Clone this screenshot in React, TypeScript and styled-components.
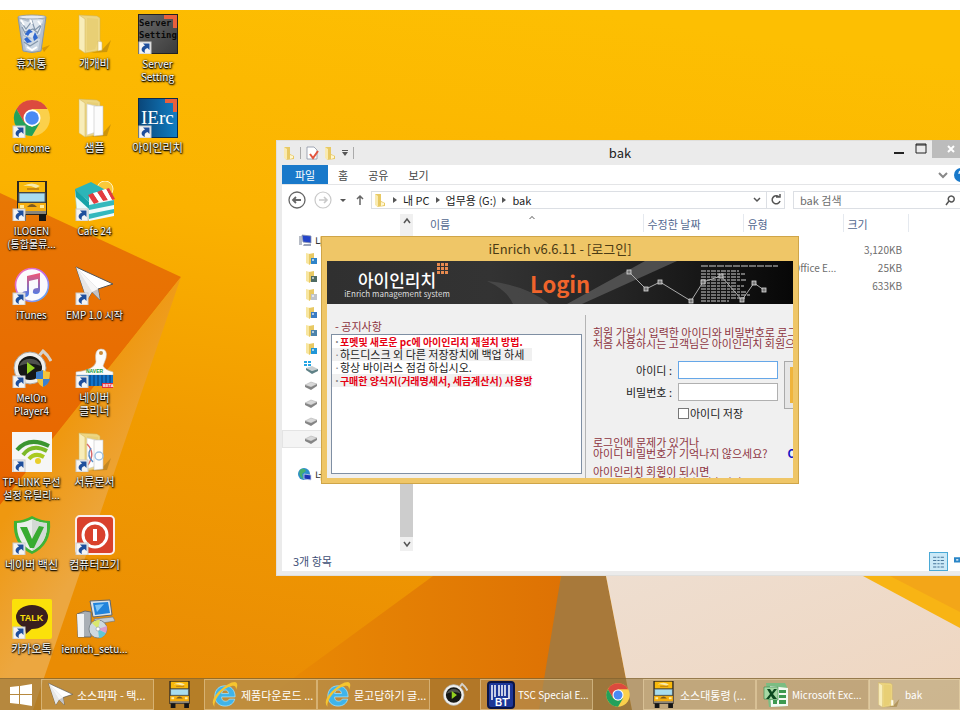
import React from "react";
import styled, { createGlobalStyle, css } from "styled-components";

const sans = `"Noto Sans CJK KR", "Noto Sans", sans-serif`;

const GlobalStyle = createGlobalStyle`
  * { box-sizing: border-box; }
  body { margin: 0; background: #fff; font-family: ${sans}; font-size: 11px; color: #333; }
  button, input { font: inherit; color: inherit; margin: 0; padding: 0; border: 0; background: none; border-radius: 0; }
  a { color: inherit; text-decoration: none; }
  ul { list-style: none; margin: 0; padding: 0; }
  svg { display: block; flex: none; }
`;

/* ---------- icons ---------- */

type IconProps = { size?: number };

const Arrow = () => (
  <g>
    <rect x="1" y="28" width="12" height="12" fill="#f4f4f4" stroke="#c9c9c9" strokeWidth="1" />
    <path d="M5 29.500h6.500V36l-2-2C7 34.500 6 36.500 7 39 2.500 37.500 2.500 33.500 7 31.500z" fill="#1f4f9c" />
  </g>
);

const RecycleBin = ({ size = 40 }: IconProps) => (
  <svg width={size} height={size} viewBox="0 0 40 40">
    <path d="M30 34l8-3-6 7z" fill="#b87800" opacity=".5" />
    <path d="M6 3l28 0-5 34q-9 3-18 0z" fill="#b3bfce" stroke="#8796a8" />
    <path d="M8 5l8 3 6-4 9 2-3 14-8 4-8-3z" fill="#dfe6ee" />
    <path d="M11 22l7 3 4-2 6 2-2 11q-6 2-12 0z" fill="#cdd8e4" />
    <path d="M9 8l5 7 6-8 3 9 7-6M12 28l6 4 8-5M13 18l8-3 5 4M10 13l4 8M29 12l-4 8" fill="none" stroke="#8497ac" strokeWidth="1.2" />
    <path d="M9 6l3 5M18 5l2 5M26 7l3 4M15 33l5 3 5-3" fill="none" stroke="#fff" strokeWidth="2" />
    <path d="M13 20l4-5 4 3-3 1-2 3zM23 18l3 6-4 3-1-4zM12 25l3-2 5 5-5 1z" fill="#2f68cf" />
    <ellipse cx="20" cy="3" rx="14" ry="2" fill="#e6eaf0" stroke="#8b97a6" strokeWidth=".8" />
  </svg>
);

const FolderArt = ({ docs }: { docs?: "plain" | "color" }) => (
  <g>
    <path d="M27 36l9-10-4 12-16 1z" fill="#8a6414" opacity=".4" />
    <path d="M4 1l18 1 3 2v22l2 3v7l-17 3z" fill="#edd682" stroke="#cdb058" strokeWidth=".5" />
    <path d="M12 4l11 1v22l-3 8-8 2z" fill="#e4c868" opacity=".5" />
    <path d="M4 1l6 4v34l-6-4z" fill="#f8edb9" stroke="#d2b762" strokeWidth=".5" />
    <path d="M23 27l4 1v8l-4 1z" fill="#fffbe8" stroke="#ccb060" strokeWidth=".5" />
    {docs && (
      <g>
        <path d="M12 6l9 2v26l-9 3z" fill="#fff" stroke="#cfcfcf" strokeWidth=".6" />
        <path d="M19 8h9v29l-9 1z" fill="#fcfcfc" stroke="#c4c4c4" strokeWidth=".6" />
      </g>
    )}
    {docs === "color" && (
      <g fill="none" strokeWidth="1.4">
        <path d="M12 12q9 9 1 21" stroke="#d9686a" />
        <path d="M16 16q-5 8 2 14" stroke="#5a8fc8" />
        <circle cx="24" cy="24" r="4" stroke="#9cc0e2" />
      </g>
    )}
  </g>
);

const Folder = ({ size = 40, docs, linked }: IconProps & { docs?: "plain" | "color"; linked?: boolean }) => (
  <svg width={size} height={size} viewBox="0 0 40 40">
    <FolderArt docs={docs} />
    {linked && <Arrow />}
  </svg>
);

const ServerTile = () => (
  <svg width="40" height="40" viewBox="0 0 40 40">
    <defs>
      <linearGradient id="srv" x1="0" y1="0" x2="1" y2="1">
        <stop offset="0" stopColor="#6a6a6a" />
        <stop offset="1" stopColor="#3b3b3b" />
      </linearGradient>
    </defs>
    <rect x=".5" y=".5" width="39" height="39" fill="url(#srv)" stroke="#222" />
    <path d="M26 1h13v13h-4V5h-9z" fill="#e9603c" />
    <g fontFamily="DejaVu Sans Mono, monospace" fontSize="9" fontWeight="700" fill="#0a0a0a">
      <text x="1" y="12">Server</text>
      <text x="1" y="24">Setting</text>
    </g>
    <Arrow />
  </svg>
);

const IErcTile = () => (
  <svg width="40" height="40" viewBox="0 0 40 40">
    <defs>
      <linearGradient id="ierc" x1="0" y1="0" x2="1" y2="0">
        <stop offset="0" stopColor="#0a4679" />
        <stop offset="1" stopColor="#117fc4" />
      </linearGradient>
    </defs>
    <rect x=".5" y=".5" width="39" height="39" fill="url(#ierc)" stroke="#0b2c4d" />
    <path d="M27 1h12v13h-4V5h-8z" fill="#e9603c" />
    <text x="3" y="26" fontFamily="Liberation Serif, serif" fontSize="19" fill="#fff">IErc</text>
    <Arrow />
  </svg>
);

const Chrome = ({ size = 40, linked }: IconProps & { linked?: boolean }) => (
  <svg width={size} height={size} viewBox="0 0 40 40">
    <circle cx="20" cy="20" r="18" fill="#fbd04b" />
    <path d="M20 11h15.600A18 18 0 0 0 4.400 11l8 14z" fill="#dc4a3e" />
    <path d="M4.400 11A18 18 0 0 0 20 38l8-13.500-8 4.500-7.800-4.500z" fill="#23a15b" />
    <circle cx="20" cy="20" r="8.500" fill="#fff" />
    <circle cx="20" cy="20" r="6.800" fill="#4a8af4" />
    {linked && <Arrow />}
  </svg>
);

const Truck = ({ size = 40, linked }: IconProps & { linked?: boolean }) => (
  <svg width={size} height={size} viewBox="0 0 40 40">
    <rect x="5" y="0" width="30" height="34" fill="#2b2620" />
    <rect x="7" y="1" width="26" height="10" fill="#f8b90c" />
    <path d="M11 5q9-5 17 0l-4 2q-6-3-13-2z" fill="#f9e9a8" />
    <rect x="15" y="7" width="12" height="2" fill="#c98a10" />
    <rect x="7" y="12" width="26" height="9" fill="#a8dcee" stroke="#5d6a70" />
    <rect x="6" y="22" width="28" height="9" fill="#f5ae10" />
    <path d="M15 26q5-6 10 0z" fill="#7b5a20" />
    <rect x="8" y="24" width="4" height="3" fill="#ffec9e" />
    <rect x="28" y="24" width="4" height="3" fill="#ffec9e" />
    <rect x="6" y="30" width="28" height="3" fill="#8a8478" />
    <rect x="7" y="33" width="7" height="7" fill="#151515" />
    <rect x="27" y="33" width="7" height="7" fill="#151515" />
    {linked && <Arrow />}
  </svg>
);

const Cafe = () => (
  <svg width="40" height="40" viewBox="0 0 40 40">
    <circle cx="30" cy="8" r="8" fill="#fbc93a" stroke="#fff2be" />
    <path d="M0 8l16-7 22 12-24 9z" fill="#2cb5b8" />
    <path d="M0 9l14 12v18L2 32z" fill="#eafafa" stroke="#9fd3d6" strokeWidth=".6" />
    <path d="M0 8l14 13v7L1 16z" fill="#15a3a8" />
    <path d="M14 14l18-6 7 12v15l-25 5z" fill="#f1fbfb" />
    <path d="M13 14l5-2 6 9-5 2zM22 11l5-2 6 10-5 1zM31 8l3-1 6 11-3 1z" fill="#e33b3f" />
    <path d="M18 12l4-1 6 9-4 1zM27 9l4-1 6 11-4 0z" fill="#fff" />
    <path d="M14 24l25-5v5l-25 5zM14 33l25-5v4l-25 6z" fill="#34b8bd" />
    <Arrow />
  </svg>
);

const ITunes = () => (
  <svg width="40" height="40" viewBox="0 0 40 40">
    <defs>
      <linearGradient id="itn" x1="0" y1="0" x2="1" y2="1">
        <stop offset="0" stopColor="#fa6ea8" />
        <stop offset=".5" stopColor="#c26be8" />
        <stop offset="1" stopColor="#46b8f5" />
      </linearGradient>
      <linearGradient id="itnNote" x1="0" y1="0" x2="0" y2="1">
        <stop offset="0" stopColor="#f25473" />
        <stop offset="1" stopColor="#3f7ff0" />
      </linearGradient>
    </defs>
    <circle cx="20" cy="20" r="16.500" fill="#fafafd" stroke="url(#itn)" strokeWidth="1.600" />
    <path d="M15 11l13-3v17q0 4-4 4t-3-3q0-3 5-3V14l-9 2v12q0 4-4 4t-3-3q0-3 5-3z" fill="url(#itnNote)" />
    <Arrow />
  </svg>
);

const PaperPlane = ({ size = 40, linked }: IconProps & { linked?: boolean }) => (
  <svg width={size} height={size} viewBox="0 0 40 40">
    <path d="M1 2l37 17-15 5 2 11-8-8-5 8z" fill="#fff" stroke="#555" strokeWidth="1" />
    <path d="M1 2l16 25-5 8z" fill="#e6e6e6" />
    <path d="M1 2l22 22 2 11-8-8z" fill="#c3c3c6" />
    <path d="M1 2l16 25 6-3z" fill="#f6f6f6" />
    {linked && <Arrow />}
  </svg>
);

const MelOn = ({ size = 40, linked }: IconProps & { linked?: boolean }) => (
  <svg width={size} height={size} viewBox="0 0 40 40">
    <path d="M27 8l4-5q5 4 8 10" fill="none" stroke="#d5d2cb" strokeWidth="3" />
    <circle cx="18" cy="20" r="16" fill="#efefed" stroke="#a9a7a2" />
    <circle cx="18" cy="20" r="12" fill="#161816" />
    <path d="M7 18q11-5 22 0a12 12 0 0 0-22 0z" fill="#4e514d" />
    <path d="M15 14l8 6-8 6z" fill="#93d120" />
    {linked && (
      <g>
        <path d="M31 22q4 2 7 2 0 12-7 15-7-3-7-15 3 0 7-2z" fill="#f5c43a" />
        <path d="M31 22v9h-7v-7q3 0 7-2zM31 31h7q-1 5-7 8z" fill="#3c80cd" />
        <Arrow />
      </g>
    )}
  </svg>
);

const Cleaner = () => (
  <svg width="40" height="40" viewBox="0 0 40 40">
    <path d="M21 14q-2-13 5-13t5 9l-3 8q2 4 10 6v3H1v-3q18-2 20-10z" fill="#fbfbfb" stroke="#c6c6c6" strokeWidth=".6" />
    <circle cx="26" cy="5" r="2" fill="#c98b3c" />
    <text x="11" y="25" fontFamily="Liberation Sans, sans-serif" fontSize="5" fontWeight="700" fill="#179c3c">NAVER</text>
    <path d="M2 27h36v10q-18 2-36 0z" fill="#1274c9" />
    <path d="M15 27v11M19 27v11M23 27v11M27 27v11M31 27v11M35 27v11" stroke="#063a77" />
    <rect x="27" y="35" width="11" height="5" fill="#e3323c" />
    <text x="28" y="39" fontFamily="Liberation Sans, sans-serif" fontSize="4" fontWeight="700" fill="#fff">BETA</text>
    <Arrow />
  </svg>
);

const TpLink = () => (
  <svg width="40" height="40" viewBox="0 0 40 40">
    <rect width="40" height="40" fill="#f6f6f6" />
    <g fill="none" strokeWidth="4">
      <path d="M5 18Q17 4 37 14" stroke="#3b9531" />
      <path d="M11 23q9-12 24-4" stroke="#7cb928" />
      <path d="M17 27q6-7 15-2" stroke="#a9ca20" />
    </g>
    <circle cx="26" cy="29" r="3" fill="#e9ce2c" />
    <Arrow />
  </svg>
);

const Vaccine = () => (
  <svg width="40" height="40" viewBox="0 0 40 40">
    <path d="M20 1q9 5 18 5 2 24-18 33Q0 30 2 6q9 0 18-5z" fill="#3fb335" />
    <path d="M20 4q8 4 15 4 1 20-15 28Q4 28 5 8q7 0 15-4z" fill="#e9eeea" />
    <path d="M20 4q8 4 15 4 1 20-15 28z" fill="#d3dad5" />
    <path d="M8 12h7l5 12 7-13 5 1-10 21h-4z" fill="#38ab31" />
    <Arrow />
  </svg>
);

const PowerOff = () => (
  <svg width="40" height="40" viewBox="0 0 40 40">
    <rect x="1" y="1" width="38" height="38" rx="4" fill="#d9412c" stroke="#fbeeea" strokeWidth="2" />
    <circle cx="20" cy="20" r="12" fill="none" stroke="#fff" strokeWidth="3" />
    <rect x="18" y="14" width="4" height="12" fill="#fff" />
    <Arrow />
  </svg>
);

const Talk = () => (
  <svg width="40" height="40" viewBox="0 0 40 40">
    <rect width="40" height="40" rx="2" fill="#fbe10a" />
    <ellipse cx="20" cy="18" rx="16" ry="12" fill="#3a1f1e" />
    <path d="M12 26l2 9 8-7z" fill="#3a1f1e" />
    <text x="8" y="22" fontFamily="Liberation Sans, sans-serif" fontSize="9" fontWeight="700" fill="#fbe10a">TALK</text>
    <Arrow />
  </svg>
);

const Setup = () => (
  <svg width="40" height="40" viewBox="0 0 40 40">
    <path d="M15 2l20-1 2 15-19 2z" fill="#dbe1e6" stroke="#5e6670" />
    <path d="M18 4l15-1 2 11-15 2z" fill="#2083dc" />
    <path d="M20 6l9-1-7 8z" fill="#7cc4f7" />
    <path d="M19 20l19-2 2 4-19 3z" fill="#c5cbd0" stroke="#6b727a" strokeWidth=".6" />
    <path d="M2 15l8-3 6 1v25H3z" fill="#a9afb5" stroke="#575d63" strokeWidth=".8" />
    <path d="M2 15h7v23H3z" fill="#f1f3f4" />
    <circle cx="23" cy="30" r="9" fill="#cfd9de" stroke="#707b82" strokeWidth=".8" />
    <path d="M23 30l-6-6q6-4 8-3z" fill="#d9e86d" />
    <path d="M23 30l8 4q-3 5-7 5z" fill="#62c7d6" />
    <path d="M23 30l9-3q0 5-1 7z" fill="#dd9ccb" />
    <circle cx="23" cy="30" r="2" fill="#fff" stroke="#8c979e" strokeWidth=".6" />
  </svg>
);

const WindowsLogo = () => (
  <svg width="24" height="24" viewBox="0 0 24 24" fill="#fff">
    <path d="M1 4l9-1v8H1zM11 3l12-2v10H11zM1 12h9v9l-9-1zM11 12h12v11l-12-2z" />
  </svg>
);

const Explorer = () => (
  <svg width="27" height="27" viewBox="0 0 28 28">
    <path
      d="M14.500 5C20.500 5 25 9 25 16.500H11C11 19.500 12.500 21 15 21c2 0 3.200-.8 4-2.200h5.600C23.400 23.500 19.500 26 14.500 26 8.500 26 4 22 4 15.500S8.500 5 14.500 5zM11 13h7.200C18 10.700 16.700 9.300 14.600 9.300S11.200 10.700 11 13z"
      fill="#3fb4ea"
      stroke="#a5e2fa"
      strokeWidth=".8"
      fillRule="evenodd"
    />
    <path d="M4 27Q-2 22 8 11 18 1 25 1q4 1 1 8 0-5-4-4Q13 7 7 16q-5 8-3 11z" fill="#f6c52e" />
  </svg>
);

const Barcode = () => (
  <svg width="28" height="28" viewBox="0 0 28 28">
    <rect x="1" y="1" width="26" height="26" rx="3" fill="#1d3797" stroke="#0b1546" strokeWidth="2" />
    <path d="M5 4v15M8 4v12M12 4v11M15 4v11M18 4v11M22 4v14" stroke="#fff" strokeWidth="1.500" />
    <text x="8" y="25" fontFamily="Liberation Sans, sans-serif" fontSize="10" fontWeight="700" fill="#fff">BT</text>
  </svg>
);

const Excel = () => (
  <svg width="26" height="26" viewBox="0 0 26 26">
    <path d="M3 1h19l2 4v19l-18 1z" fill="#7bbd83" />
    <path d="M7 4l18 2v18l-17 1z" fill="#f4faf3" />
    <path d="M16 8h7v3h-7zM16 13h7v3h-7zM16 18h7v4h-7zM10 18h4v4h-4z" fill="#3d9a50" />
    <path d="M1 5l14 0v13L1 17z" fill="#a5d8a4" stroke="#38884a" strokeWidth=".6" />
    <path d="M4 7h3l2 3 2-3h3l-4 5 4 5h-4l-2-3-2 3H3l4-5z" fill="#0c4a20" />
  </svg>
);

type NodeKind = "pc" | "download" | "video" | "doc" | "photo" | "user" | "music" | "system" | "drive" | "net";
const folderBadge: Partial<Record<NodeKind, string>> = {
  download: "#2e83c9", video: "#4e6a63", doc: "#bfc3ca", photo: "#3a7cc4", user: "#4c83ab", music: "#2196d8",
};

const NodeIcon = ({ kind }: { kind: NodeKind }) => (
  <svg width="14" height="14" viewBox="0 0 14 14">
    {kind === "pc" && (
      <g>
        <path d="M1 2h3v9H1z" fill="#b7bcc6" />
        <path d="M4 1l9 1v7l-8-1z" fill="#2344c9" stroke="#8c95ad" strokeWidth=".8" />
        <path d="M6 10h7v2H5z" fill="#9aa3b8" />
      </g>
    )}
    {kind === "net" && (
      <g>
        <circle cx="6" cy="6" r="6" fill="#2d8ecb" />
        <path d="M2 2q4-3 6 1l-4 3 1 5q-5-3-3-9z" fill="#48b06c" />
        <path d="M6 6l7 1v5l-7-1z" fill="#1d36b5" stroke="#cad4e8" strokeWidth=".8" />
      </g>
    )}
    {kind === "system" && (
      <g>
        <path d="M0 1h3v2H0zM4 1h3v2H4zM0 4h3v2H0zM4 4h3v2H4z" fill="#25a5e3" />
        <path d="M2 8l6-2 6 3-6 2z" fill="#c8ced0" />
        <path d="M2 8l6 3 6-2v2l-6 3-6-4z" fill="#5f8186" />
      </g>
    )}
    {kind === "drive" && (
      <g>
        <path d="M1 7l6-3 6 2-6 3z" fill="#d8d8d8" stroke="#aaa" strokeWidth=".5" />
        <path d="M1 7l6 2 6-3v2l-6 4-6-3z" fill="#858585" />
      </g>
    )}
    {folderBadge[kind] && (
      <g>
        <path d="M2 1l4 1v11l-4-2z" fill="#f8e6a0" />
        <path d="M5 2l5-1v8l-5 4z" fill="#e8c964" />
        <path d="M7 6h6v6H7z" fill={folderBadge[kind]} />
        <path d="M8 7h2v2H8z" fill="#fff" opacity=".6" />
      </g>
    )}
  </svg>
);

const SmallFolder = () => (
  <svg width="14" height="14" viewBox="0 0 14 14">
    <path d="M2 1h6v7l4 2v3l-8 1z" fill="#e8c964" />
    <path d="M2 1l3 2v11l-3-2z" fill="#f9eab0" />
    <path d="M8 9l3 1v2l-3 1z" fill="#fff6d0" />
  </svg>
);

const Glyph = ({ d, size = 12, color = "#555", width = 1.5 }: { d: string; size?: number; color?: string; width?: number }) => (
  <svg width={size} height={size} viewBox="0 0 12 12" fill="none" stroke={color} strokeWidth={width}>
    <path d={d} />
  </svg>
);

const Triangle = ({ d = "M2 1l4 3-4 3z" }: { d?: string }) => (
  <svg width="8" height="8" viewBox="0 0 8 8" fill="#555">
    <path d={d} />
  </svg>
);

/* ---------- desktop ---------- */

const Page = styled.div`
  min-height: 100vh;
  display: flex;
  flex-direction: column;
  padding: 10px 0;
  overflow: hidden;
`;

const Screen = styled.main`
  position: relative;
  flex: 1;
  display: flex;
  flex-direction: column;
  overflow: hidden;
  background: #f9ac00;
`;

const WallpaperSvg = styled.svg`
  position: absolute;
  inset: 0;
  width: 100%;
  height: 100%;
`;

const Wallpaper = () => (
  <WallpaperSvg viewBox="0 10 960 700" preserveAspectRatio="none" aria-hidden="true">
    <defs>
      <linearGradient id="base" x1="0.600" y1="0" x2="0.400" y2="1">
        <stop offset="0" stopColor="#fdbf02" />
        <stop offset=".35" stopColor="#fbb200" />
        <stop offset=".65" stopColor="#f19b00" />
        <stop offset="1" stopColor="#ea8c04" />
      </linearGradient>
      <linearGradient id="fold" x1="0" y1="0" x2="0" y2="1">
        <stop offset="0" stopColor="#e87804" />
        <stop offset="1" stopColor="#e86400" />
      </linearGradient>
      <linearGradient id="strip" gradientUnits="userSpaceOnUse" x1="30" y1="480" x2="105" y2="530">
        <stop offset="0" stopColor="#ef9810" />
        <stop offset="1" stopColor="#eca740" />
      </linearGradient>
      <linearGradient id="amber" x1="0" y1="0" x2="1" y2="0">
        <stop offset="0" stopColor="#ea8c04" />
        <stop offset="1" stopColor="#de7204" />
      </linearGradient>
      <linearGradient id="peach" x1="0" y1="0" x2="1" y2="1">
        <stop offset="0" stopColor="#eeded0" />
        <stop offset="1" stopColor="#efd6c0" />
      </linearGradient>
    </defs>
    <rect y="10" width="960" height="700" fill="url(#base)" />
    <path d="M0 193L181 277L0 505z" fill="url(#fold)" />
    <path d="M181 277L0 505V710H33z" fill="url(#strip)" />
    <path d="M433 576L250 710H545L561 576z" fill="url(#amber)" />
    <path d="M561 576H606L632 710H539z" fill="#a8793a" />
    <path d="M606 576H960V710H632z" fill="url(#peach)" />
    <path d="M863 576L960 628V576z" fill="#f8b414" />
    <path d="M890 576L960 612V576z" fill="#f3a618" />
  </WallpaperSvg>
);

const IconColumns = styled.div`
  position: relative;
  flex: 1;
  display: flex;
`;

const IconColumn = styled.div`
  flex: none;
  width: 63px;
  display: grid;
  grid-template-columns: 63px;
  grid-template-rows: repeat(8, 1fr);
`;

const Shortcut = styled.button`
  min-height: 0;
  padding-top: 4px;
  display: flex;
  flex-direction: column;
  align-items: center;
  justify-content: flex-start;
  gap: 3px;
`;

const ShortcutLabel = styled.span<{ $latin: boolean }>`
  color: #fff;
  font-size: ${({ $latin }) => ($latin ? 10 : 11)}px;
  line-height: 13px;
  white-space: pre;
  text-align: center;
  text-shadow: 0 0 2px #000, 1px 1px 2px #000, 0 1px 1px #000;
`;

const columns: { label: string; icon: React.ReactNode }[][] = [
  [
    { label: "휴지통", icon: <RecycleBin /> },
    { label: "Chrome", icon: <Chrome linked /> },
    { label: "ILOGEN\n(통합물류...", icon: <Truck linked /> },
    { label: "iTunes", icon: <ITunes /> },
    { label: "MelOn\nPlayer4", icon: <MelOn linked /> },
    { label: "TP-LINK 무선\n설정 유틸리...", icon: <TpLink /> },
    { label: "네이버 백신", icon: <Vaccine /> },
    { label: "카카오톡", icon: <Talk /> },
  ],
  [
    { label: "개개비", icon: <Folder /> },
    { label: "샘플", icon: <Folder docs="plain" /> },
    { label: "Cafe 24", icon: <Cafe /> },
    { label: "EMP 1.0 시작", icon: <PaperPlane linked /> },
    { label: "네이버\n클리너", icon: <Cleaner /> },
    { label: "서류문서", icon: <Folder docs="color" linked /> },
    { label: "컴퓨터끄기", icon: <PowerOff /> },
    { label: "ienrich_setu...", icon: <Setup /> },
  ],
  [
    { label: "Server\nSetting", icon: <ServerTile /> },
    { label: "아이인리치", icon: <IErcTile /> },
  ],
];

/* ---------- taskbar ---------- */

const Taskbar = styled.nav`
  position: relative;
  height: 32px;
  display: flex;
  background: rgba(148, 118, 62, 0.62);
  border-top: 1px solid rgba(120, 90, 40, 0.5);
`;

const TaskButton = styled.button<{ $kind?: "start" | "pinned" | "window" | "active" }>`
  flex: none;
  display: flex;
  align-items: center;
  gap: 3px;
  overflow: hidden;
  color: #fff;
  white-space: nowrap;
  ${({ $kind }) =>
    $kind === "start" || $kind === "pinned"
      ? css`
          width: ${$kind === "start" ? 41 : 50}px;
          justify-content: center;
        `
      : css`
          width: 113px;
          padding-left: 6px;
          border: 1px solid rgba(245, 225, 180, 0.45);
          background: rgba(255, 235, 190, 0.14);
        `}
  ${({ $kind }) =>
    $kind === "active" &&
    css`
      flex: 1 0 91px;
      background: rgba(255, 245, 220, 0.3);
    `}
`;

const TaskLabel = styled.span<{ $latin?: boolean }>`
  font-size: ${({ $latin }) => ($latin ? 10 : 11)}px;
`;

/* ---------- file explorer ---------- */

const ExplorerWindow = styled.section`
  position: absolute;
  top: 130px;
  left: 276px;
  right: -24px;
  padding: 0 6px 5px;
  background: #ebebeb;
  box-shadow: inset 0 0 0 1px #e0dfdc;
`;

const TitleBar = styled.header`
  height: 25px;
  margin-right: 16px;
  display: grid;
  grid-template-columns: 1fr auto 1fr;
  align-items: center;
`;

const WindowTitle = styled.h1`
  margin: 0;
  padding-right: 4px;
  font-size: 13px;
  font-weight: 400;
  color: #222;
`;

const QuickTools = styled.div`
  display: flex;
  align-items: center;
  gap: 4px;
`;

const Divider = styled.span`
  width: 1px;
  height: 12px;
  background: #aaa;
`;

const WindowControls = styled.div`
  align-self: start;
  display: flex;
  justify-content: flex-end;
  margin-right: -16px;
`;

const WindowControl = styled.button<{ $close?: boolean }>`
  width: ${({ $close }) => ($close ? 46 : 22)}px;
  height: 18px;
  padding-right: ${({ $close }) => ($close ? 8 : 0)}px;
  display: flex;
  align-items: center;
  justify-content: center;
  background: ${({ $close }) => ($close ? "#bcbcbc" : "transparent")};
`;

const Ribbon = styled.div`
  height: 20px;
  display: flex;
  align-items: stretch;
  background: #fff;
  border-bottom: 1px solid #e4e5e7;
`;

const RibbonTab = styled.button<{ $primary?: boolean }>`
  width: ${({ $primary }) => ($primary ? "46px" : "auto")};
  padding: ${({ $primary }) => ($primary ? "0" : "0 10px")};
  background: ${({ $primary }) => ($primary ? "#1979ca" : "transparent")};
  color: ${({ $primary }) => ($primary ? "#fff" : "#444")};
`;

const RibbonEnd = styled.div`
  margin-left: auto;
  padding-right: 10px;
  display: flex;
  align-items: center;
  gap: 5px;
`;

const AddressRow = styled.div`
  height: 29px;
  padding: 0 8px 0 6px;
  display: flex;
  align-items: center;
  background: #fff;
`;

const NavButton = styled.button<{ $w: number }>`
  width: ${({ $w }) => $w}px;
  height: 18px;
  display: flex;
  align-items: center;
`;

const AddressBox = styled.div`
  flex: 1;
  height: 18px;
  display: flex;
  align-items: center;
  gap: 4px;
  padding-left: 1px;
  border: 1px solid #dcdfe4;
  color: #222;
`;

const AddressEnd = styled.div`
  margin-left: auto;
  height: 100%;
  display: flex;
`;

const BoxButton = styled.button<{ $split?: boolean }>`
  width: 18px;
  display: flex;
  align-items: center;
  justify-content: center;
  border-left: ${({ $split }) => ($split ? "1px solid #dcdfe4" : "0")};
`;

const SearchBox = styled.label`
  width: 177px;
  height: 18px;
  margin-left: 8px;
  padding: 0 13px 0 6px;
  display: flex;
  align-items: center;
  border: 1px solid #dcdfe4;
`;

const SearchInput = styled.input`
  flex: 1;
  min-width: 0;
  outline: none;
  &::placeholder { color: #6d6d6d; opacity: 1; }
`;

const Main = styled.div`
  height: 337px;
  display: flex;
  background: #fff;
`;

const Tree = styled.ul`
  width: 118px;
  padding-top: 18px;
`;

const TreeRow = styled.li<{ $root?: boolean; $selected?: boolean; $gap?: boolean }>`
  height: 18px;
  margin-top: ${({ $gap }) => ($gap ? 18 : 0)}px;
  padding-left: ${({ $root }) => ($root ? 16 : 22)}px;
  display: flex;
  align-items: center;
  gap: 3px;
  white-space: nowrap;
  background: ${({ $selected }) => ($selected ? "#f4f4f4" : "transparent")};
  box-shadow: ${({ $selected }) => ($selected ? "inset 0 0 0 1px #e4e4e4" : "none")};
`;

const Scrollbar = styled.div`
  width: 13px;
  display: flex;
  flex-direction: column;
  background: #f0f0f0;
`;

const ScrollButton = styled.button`
  height: 14px;
  display: flex;
  align-items: center;
  justify-content: center;
`;

const ScrollThumb = styled.div`
  flex: 1;
  margin-top: 24px;
  background: #cdcdcd;
`;

const FileTable = styled.table`
  align-self: flex-start;
  width: 495px;
  table-layout: fixed;
  border-collapse: collapse;
`;

const HeadCell = styled.th<{ $w: number; $first?: boolean }>`
  position: relative;
  width: ${({ $w }) => $w}px;
  height: 18px;
  padding: 1px 0 0 ${({ $first }) => ($first ? 17 : 4)}px;
  border-right: 1px solid #e5e9ef;
  color: #52678f;
  font-weight: 400;
  text-align: left;
  line-height: 16px;
`;

const SortMark = styled.span`
  position: absolute;
  top: 0;
  left: 115px;
`;

const Spacer = styled.tr`
  height: 9px;
`;

const Cell = styled.td<{ $right?: boolean }>`
  height: 18px;
  padding: 0 6px 0 4px;
  color: #6d6d6d;
  font-size: 10px;
  text-align: ${({ $right }) => ($right ? "right" : "left")};
  line-height: 18px;
  white-space: nowrap;
`;

const StatusBar = styled.footer`
  height: 20px;
  padding: 0 8px 0 11px;
  display: flex;
  align-items: center;
  gap: 3px;
  background: #fff;
  color: #3e4f76;
`;

const ViewButton = styled.button<{ $on?: boolean; $push?: boolean }>`
  width: 19px;
  height: 19px;
  margin-left: ${({ $push }) => ($push ? "auto" : "0")};
  display: flex;
  align-items: center;
  justify-content: center;
  border: 1px solid ${({ $on }) => ($on ? "#4aa9d6" : "transparent")};
  background: ${({ $on }) => ($on ? "#cbe9f7" : "transparent")};
`;

const tree: { kind: NodeKind; label?: string; root?: boolean; gap?: boolean; selected?: boolean }[] = [
  { kind: "pc", label: "내 PC", root: true },
  { kind: "download" }, { kind: "video" }, { kind: "doc" }, { kind: "photo" }, { kind: "user" }, { kind: "music" },
  { kind: "system" }, { kind: "drive" }, { kind: "drive" }, { kind: "drive" }, { kind: "drive", selected: true },
  { kind: "net", label: "네트워크", root: true, gap: true },
];

const files = [
  { type: "", size: "3,120KB" },
  { type: "Microsoft Office E...", size: "25KB" },
  { type: "", size: "633KB" },
];

const FileExplorer = () => (
  <ExplorerWindow>
    <TitleBar>
      <QuickTools>
        <SmallFolder />
        <Divider />
        <svg width="14" height="14" viewBox="0 0 14 14">
          <path d="M2 1h7l3 3v9H2z" fill="#fff" stroke="#8a93a3" strokeWidth=".8" />
          <path d="M5 8l3 4 5-7" fill="none" stroke="#e2533d" strokeWidth="2" />
        </svg>
        <SmallFolder />
        <Triangle d="M1 1h6v1H1zM1 3h6L4 7z" />
        <Divider />
      </QuickTools>
      <WindowTitle>bak</WindowTitle>
      <WindowControls>
        <WindowControl aria-label="최소화"><Glyph d="M1 10h10" color="#222" width={2} /></WindowControl>
        <WindowControl aria-label="최대화"><Glyph d="M1 2h10M1 1v9h10v-9z" color="#222" width={1} /></WindowControl>
        <WindowControl $close aria-label="닫기"><Glyph d="M3 3l6 6M9 3l-6 6" color="#fff" width={2} /></WindowControl>
      </WindowControls>
    </TitleBar>
    <Ribbon>
      <RibbonTab $primary>파일</RibbonTab>
      <RibbonTab>홈</RibbonTab>
      <RibbonTab>공유</RibbonTab>
      <RibbonTab>보기</RibbonTab>
      <RibbonEnd>
        <Glyph d="M2 4l4 4 4-4" color="#888" width={2} />
        <svg width="14" height="14" viewBox="0 0 14 14">
          <circle cx="7" cy="7" r="7" fill="#1979ca" />
          <path d="M5 6q0-3 2-3t2 2-2 3M7 10v2" fill="none" stroke="#fff" strokeWidth="1.300" />
        </svg>
      </RibbonEnd>
    </Ribbon>
    <AddressRow>
      <NavButton $w={26} aria-label="뒤로">
        <svg width="18" height="18" viewBox="0 0 18 18" fill="none" stroke="#666" strokeWidth="1.300">
          <circle cx="9" cy="9" r="8" />
          <path d="M13 9H5M8 6L5 9l3 3" strokeWidth="1.800" />
        </svg>
      </NavButton>
      <NavButton $w={25} aria-label="앞으로">
        <svg width="18" height="18" viewBox="0 0 18 18" fill="none" stroke="#c9c9c9" strokeWidth="1.200">
          <circle cx="9" cy="9" r="8" />
          <path d="M5 9h8M10 6l3 3-3 3" strokeWidth="1.600" />
        </svg>
      </NavButton>
      <NavButton $w={15} aria-label="최근 위치"><Triangle d="M1 3h6L4 6z" /></NavButton>
      <NavButton $w={17} aria-label="위로"><Glyph d="M6 11V2M3 5l3-3 3 3" color="#666" /></NavButton>
      <AddressBox>
        <SmallFolder />
        <Triangle />
        <span>내 PC</span>
        <Triangle />
        <span>업무용 (G:)</span>
        <Triangle />
        <span>bak</span>
        <AddressEnd>
          <BoxButton aria-label="이전 위치"><Glyph d="M3 4l3 3 3-3" size={12} /></BoxButton>
          <BoxButton $split aria-label="새로 고침"><Glyph d="M9 3a4 4 0 1 0 1 4M6 3h4V0" size={12} /></BoxButton>
        </AddressEnd>
      </AddressBox>
      <SearchBox>
        <SearchInput placeholder="bak 검색" aria-label="bak 검색" />
        <Glyph d="M2 11l3-4M5 7a3 3 0 1 1 2 1z" />
      </SearchBox>
    </AddressRow>
    <Main>
      <Tree>
        {tree.map((n, i) => (
          <TreeRow key={i} $root={n.root} $gap={n.gap} $selected={n.selected}>
            <NodeIcon kind={n.kind} />
            {n.label}
          </TreeRow>
        ))}
      </Tree>
      <Scrollbar>
        <ScrollButton aria-label="위로 스크롤"><Glyph d="M3 8l3-4 3 4" /></ScrollButton>
        <ScrollThumb />
        <ScrollButton aria-label="아래로 스크롤"><Glyph d="M3 4l3 4 3-4" /></ScrollButton>
      </Scrollbar>
      <FileTable>
        <thead>
          <tr>
            <HeadCell $w={230} $first>
              이름
              <SortMark><Triangle d="M1 5l3-3 3 3-1 0-2-2-2 2z" /></SortMark>
            </HeadCell>
            <HeadCell $w={100}>수정한 날짜</HeadCell>
            <HeadCell $w={100}>유형</HeadCell>
            <HeadCell $w={65}>크기</HeadCell>
          </tr>
        </thead>
        <tbody>
          <Spacer />
          {files.map((f) => (
            <tr key={f.size}>
              <Cell />
              <Cell />
              <Cell>{f.type}</Cell>
              <Cell $right>{f.size}</Cell>
            </tr>
          ))}
        </tbody>
      </FileTable>
    </Main>
    <StatusBar>
      <span>3개 항목</span>
      <ViewButton $on $push aria-label="자세히">
        <Glyph d="M1 2h3M5 2h2M8 2h3M1 5h3M5 5h2M8 5h3M1 8h3M5 8h2M8 8h3M1 11h3M5 11h2M8 11h3" color="#47759a" width={1} size={13} />
      </ViewButton>
      <ViewButton aria-label="큰 아이콘">
        <Glyph d="M1 3h4v3H1zM7 3h4M7 6h4" color="#2a86c8" width={2} size={13} />
      </ViewButton>
    </StatusBar>
  </ExplorerWindow>
);

/* ---------- login dialog ---------- */

const Dialog = styled.section`
  position: absolute;
  top: 226px;
  left: 321px;
  width: 478px;
  padding: 0 6px 6px;
  background: #efc667;
  box-shadow: inset 0 0 0 1px #cfa548;
`;

const DialogTitle = styled.h2`
  margin: 0;
  height: 25px;
  font-size: 13px;
  line-height: 25px;
  font-weight: 400;
  text-align: center;
  color: #4b3b14;
`;

const Banner = styled.div`
  position: relative;
  height: 43px;
  display: flex;
  align-items: center;
  overflow: hidden;
`;

const BannerSvg = styled.svg`
  position: absolute;
  inset: 0;
  width: 100%;
  height: 100%;
`;

const Brand = styled.div`
  position: relative;
  width: 140px;
  padding-top: 4px;
  display: flex;
  flex-direction: column;
  align-items: center;
  color: #fff;
`;

const BrandName = styled.span`
  font-size: 17px;
  line-height: 18px;
  font-weight: 500;
`;

const BrandTag = styled.span`
  font-size: 8px;
  line-height: 10px;
  color: #ddd;
`;

const LoginWord = styled.strong`
  position: relative;
  margin-left: 63px;
  font-size: 22px;
  line-height: 42px;
  font-weight: 700;
  color: #f0642b;
`;

const DialogBody = styled.div`
  height: 174px;
  padding-top: 11px;
  display: flex;
  overflow: hidden;
  background: #f0f0f0;
  color: #222;
  white-space: nowrap;
`;

const NoticePane = styled.div`
  flex: none;
  width: 259px;
  padding: 3px 3px 4px 4px;
  display: flex;
  flex-direction: column;
  border-right: 1px solid #b4b4b4;
`;

const NoticeTitle = styled.h3`
  margin: 0 0 0 4px;
  font-size: 11px;
  line-height: 16px;
  font-weight: 400;
  color: #8d3440;
`;

const NoticeList = styled.ul`
  flex: 1;
  background: #fff;
  border: 1px solid #7f8fa3;
`;

const Notice = styled.li<{ $hot?: boolean; $alt?: boolean }>`
  width: 200px;
  height: 13px;
  display: flex;
  padding-left: 2px;
  line-height: 13px;
  background: ${({ $alt }) => ($alt ? "#f0f0f0" : "#fff")};
  color: ${({ $hot }) => ($hot ? "#e60012" : "#222")};
  font-size: ${({ $hot }) => ($hot ? 10 : 11)}px;
  font-weight: ${({ $hot }) => ($hot ? 700 : 400)};
`;

const Bullet = styled.span`
  width: 6px;
  color: #888;
`;

const LoginPane = styled.form`
  flex: 1;
  min-width: 0;
  padding: 12px 0 0 7px;
  display: flex;
  flex-direction: column;
`;

const Info = styled.p<{ $gap?: number }>`
  margin: ${({ $gap }) => $gap ?? 0}px 0 0;
  line-height: 11px;
  color: #8d3440;
`;

const Credentials = styled.div`
  margin-top: 12px;
  display: flex;
  gap: 6px;
`;

const Fields = styled.div`
  display: grid;
  grid-template-columns: 79px 100px;
  column-gap: 6px;
  row-gap: 4px;
  align-items: center;
`;

const FieldLabel = styled.label`
  line-height: 18px;
  text-align: right;
`;

const Field = styled.input<{ $focus?: boolean }>`
  width: 100px;
  height: 18px;
  background: #fff;
  border: 1px solid ${({ $focus }) => ($focus ? "#66a7e8" : "#b0b0b0")};
  outline: none;
`;

const SaveRow = styled.label`
  grid-column: 2;
  display: flex;
  align-items: center;
  gap: 1px;
  line-height: 16px;
`;

const Check = styled.input`
  appearance: none;
  width: 11px;
  height: 11px;
  background: #fff;
  border: 1px solid #777;
`;

const Submit = styled.button`
  flex: none;
  width: 70px;
  height: 48px;
  padding: 5px;
  display: flex;
  border: 1px solid #aaa;
  background: #e6e6e6;
`;

const SubmitFace = styled.span`
  flex: 1;
  background: #efb43c;
`;

const Help = styled.div`
  margin-top: 16px;
  display: flex;
  align-items: flex-end;
  gap: 20px;
`;

const HelpLink = styled.a`
  color: #1313c4;
  font-weight: 700;
  line-height: 11px;
`;

const chart: [number, number][] = [
  [302, 11], [319, 28], [333, 21], [364, 40], [376, 21], [394, 15], [415, 39], [427, 22], [437, 29],
];

const LoginDialog = () => (
  <Dialog aria-label="로그인">
    <DialogTitle>iEnrich v6.6.11 - [로그인]</DialogTitle>
    <Banner>
      <BannerSvg viewBox="0 0 466 43" preserveAspectRatio="none">
        <defs>
          <linearGradient id="bn" x1="0" y1="0" x2="1" y2="0">
            <stop offset="0" stopColor="#303030" />
            <stop offset=".35" stopColor="#333" />
            <stop offset=".62" stopColor="#252525" />
            <stop offset="1" stopColor="#070707" />
          </linearGradient>
        </defs>
        <rect width="466" height="43" fill="url(#bn)" />
        <path d="M160 20q40 4 62 23H186q-6-14-26-23z" fill="#555" opacity=".6" />
        <path d="M240 43L318 0h32L255 43z" fill="#5a5a5a" opacity=".8" />
        <path d="M374 5h77" stroke="#ccc" strokeWidth="1" strokeDasharray="7 1" />
        <path d="M374 10h38M374 13h44M374 16h40M374 19h45M374 22h36M374 25h43M374 28h39M374 31h46M374 34h50M374 37h44M374 40h28" stroke="#999" strokeWidth="2" strokeDasharray="5 1 3 1" opacity=".7" />
        <polyline points={chart.map((p) => p.join(",")).join(" ")} fill="none" stroke="#aaa" />
        {chart.map(([x, y]) => (
          <rect key={x} x={x - 2} y={y - 2} width="4" height="4" fill="#777" stroke="#ddd" strokeWidth=".8" />
        ))}
        {[0, 1, 2].map((r) =>
          [0, 1, 2].map((c) => <rect key={`${r}${c}`} x={110 + c * 4} y={2 + r * 4} width="3" height="3" fill="#e88a4f" />)
        )}
      </BannerSvg>
      <Brand>
        <BrandName>아이인리치</BrandName>
        <BrandTag>iEnrich management system</BrandTag>
      </Brand>
      <LoginWord>Login</LoginWord>
    </Banner>
    <DialogBody>
      <NoticePane>
        <NoticeTitle>- 공지사항</NoticeTitle>
        <NoticeList>
          <Notice $hot><Bullet>·</Bullet><a href="#n1">포멧및 새로운 pc에 아이인리치 재설치 방법.</a></Notice>
          <Notice $alt><Bullet>·</Bullet><a href="#n2">하드디스크 외 다른 저장장치에 백업 하세</a></Notice>
          <Notice><Bullet>·</Bullet><a href="#n3">항상 바이러스 점검 하십시오.</a></Notice>
          <Notice $hot $alt><Bullet>·</Bullet><a href="#n4">구매한 양식지(거래명세서, 세금계산서) 사용방</a></Notice>
        </NoticeList>
      </NoticePane>
      <LoginPane onSubmit={(e) => e.preventDefault()}>
        <Info>회원 가입시 입력한 아이디와 비밀번호로 로그인</Info>
        <Info>처음 사용하시는 고객님은 아이인리치 회원으로</Info>
        <Credentials>
          <Fields>
            <FieldLabel htmlFor="uid">아이디 :</FieldLabel>
            <Field id="uid" $focus />
            <FieldLabel htmlFor="pw">비밀번호 :</FieldLabel>
            <Field id="pw" type="password" />
            <SaveRow><Check type="checkbox" />아이디 저장</SaveRow>
          </Fields>
          <Submit aria-label="로그인"><SubmitFace /></Submit>
        </Credentials>
        <Help>
          <div>
            <Info>로그인에 문제가 있거나</Info>
            <Info>아이디 비밀번호가 기억나지 않으세요?</Info>
          </div>
          <HelpLink href="#find">C</HelpLink>
        </Help>
        <Info $gap={7}>아이인리치 회원이 되시면</Info>
        <Info>프로그램을 사용하실 수 있습니다</Info>
      </LoginPane>
    </DialogBody>
  </Dialog>
);

export default function App() {
  return (
    <>
      <GlobalStyle />
      <Page>
        <Screen>
          <Wallpaper />
          <IconColumns>
            {columns.map((items, i) => (
              <IconColumn key={i}>
                {items.map((s) => (
                  <Shortcut key={s.label}>
                    {s.icon}
                    <ShortcutLabel $latin={/[A-Za-z]/.test(s.label)}>{s.label}</ShortcutLabel>
                  </Shortcut>
                ))}
              </IconColumn>
            ))}
          </IconColumns>
          <FileExplorer />
          <LoginDialog />
          <Taskbar>
            <TaskButton $kind="start" aria-label="시작"><WindowsLogo /></TaskButton>
            <TaskButton><PaperPlane size={26} /><TaskLabel>소스파파 - 택...</TaskLabel></TaskButton>
            <TaskButton $kind="pinned" aria-label="ILOGEN"><Truck size={27} /></TaskButton>
            <TaskButton><Explorer /><TaskLabel>제품다운로드 ...</TaskLabel></TaskButton>
            <TaskButton><Explorer /><TaskLabel>묻고답하기 글...</TaskLabel></TaskButton>
            <TaskButton $kind="pinned" aria-label="MelOn"><MelOn size={26} /></TaskButton>
            <TaskButton><Barcode /><TaskLabel $latin>TSC Special E...</TaskLabel></TaskButton>
            <TaskButton $kind="pinned" aria-label="Chrome"><Chrome size={26} /></TaskButton>
            <TaskButton><Truck size={27} /><TaskLabel>소스대통령 (...</TaskLabel></TaskButton>
            <TaskButton><Excel /><TaskLabel $latin>Microsoft Exc...</TaskLabel></TaskButton>
            <TaskButton $kind="active"><Folder size={26} /><TaskLabel $latin>bak</TaskLabel></TaskButton>
          </Taskbar>
        </Screen>
      </Page>
    </>
  );
}
